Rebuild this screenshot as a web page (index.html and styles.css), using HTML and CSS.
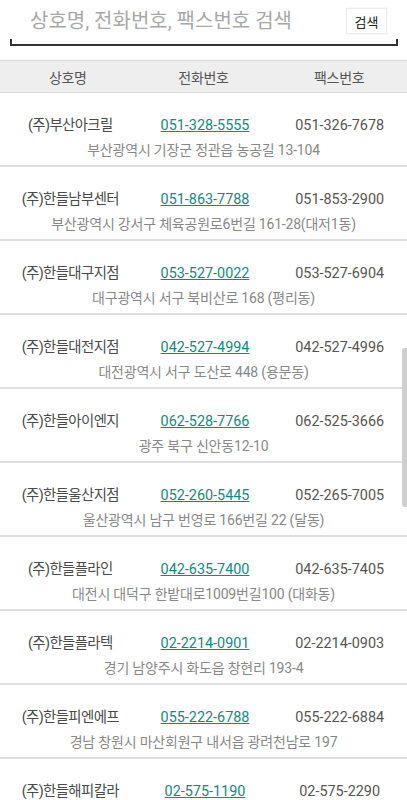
FILE: index.html
```html
<!DOCTYPE html>
<html lang="ko">
<head>
    <meta charset="UTF-8">
    <meta name="viewport" content="width=device-width, initial-scale=1.0">
    <title>대리점 찾기</title>
    <link rel="stylesheet" href="styles.css">
</head>
<body>
    <div class="search-bar">
        <div class="search-field">
            <input type="text" class="search-input" placeholder="상호명, 전화번호, 팩스번호 검색">
            <button type="button" class="search-button">검색</button>
        </div>
    </div>

    <div class="list-header">
        <div>상호명</div>
        <div>전화번호</div>
        <div>팩스번호</div>
    </div>

    <ul class="store-list">
        <li class="store">
            <div class="store-row">
                <span class="store-name">(주)부산아크릴</span>
                <a class="store-tel" href="tel:051-328-5555">051-328-5555</a>
                <span class="store-fax">051-326-7678</span>
            </div>
            <div class="store-addr">부산광역시 기장군 정관읍 농공길 13-104</div>
        </li>
        <li class="store">
            <div class="store-row">
                <span class="store-name">(주)한들남부센터</span>
                <a class="store-tel" href="tel:051-863-7788">051-863-7788</a>
                <span class="store-fax">051-853-2900</span>
            </div>
            <div class="store-addr">부산광역시 강서구 체육공원로6번길 161-28(대저1동)</div>
        </li>
        <li class="store">
            <div class="store-row">
                <span class="store-name">(주)한들대구지점</span>
                <a class="store-tel" href="tel:053-527-0022">053-527-0022</a>
                <span class="store-fax">053-527-6904</span>
            </div>
            <div class="store-addr">대구광역시 서구 북비산로 168 (평리동)</div>
        </li>
        <li class="store">
            <div class="store-row">
                <span class="store-name">(주)한들대전지점</span>
                <a class="store-tel" href="tel:042-527-4994">042-527-4994</a>
                <span class="store-fax">042-527-4996</span>
            </div>
            <div class="store-addr">대전광역시 서구 도산로 448 (용문동)</div>
        </li>
        <li class="store">
            <div class="store-row">
                <span class="store-name">(주)한들아이엔지</span>
                <a class="store-tel" href="tel:062-528-7766">062-528-7766</a>
                <span class="store-fax">062-525-3666</span>
            </div>
            <div class="store-addr">광주 북구 신안동12-10</div>
        </li>
        <li class="store">
            <div class="store-row">
                <span class="store-name">(주)한들울산지점</span>
                <a class="store-tel" href="tel:052-260-5445">052-260-5445</a>
                <span class="store-fax">052-265-7005</span>
            </div>
            <div class="store-addr">울산광역시 남구 번영로 166번길 22 (달동)</div>
        </li>
        <li class="store">
            <div class="store-row">
                <span class="store-name">(주)한들플라인</span>
                <a class="store-tel" href="tel:042-635-7400">042-635-7400</a>
                <span class="store-fax">042-635-7405</span>
            </div>
            <div class="store-addr">대전시 대덕구 한밭대로1009번길100 (대화동)</div>
        </li>
        <li class="store">
            <div class="store-row">
                <span class="store-name">(주)한들플라텍</span>
                <a class="store-tel" href="tel:02-2214-0901">02-2214-0901</a>
                <span class="store-fax">02-2214-0903</span>
            </div>
            <div class="store-addr">경기 남양주시 화도읍 창현리 193-4</div>
        </li>
        <li class="store">
            <div class="store-row">
                <span class="store-name">(주)한들피엔에프</span>
                <a class="store-tel" href="tel:055-222-6788">055-222-6788</a>
                <span class="store-fax">055-222-6884</span>
            </div>
            <div class="store-addr">경남 창원시 마산회원구 내서읍 광려천남로 197</div>
        </li>
        <li class="store">
            <div class="store-row">
                <span class="store-name">(주)한들해피칼라</span>
                <a class="store-tel" href="tel:02-575-1190">02-575-1190</a>
                <span class="store-fax">02-575-2290</span>
            </div>
        </li>
    </ul>

    <div class="scroll-thumb"></div>
</body>
</html>
```

FILE: styles.css
```css
body {
    margin: 0;
    font-family: Roboto, "Noto Sans CJK KR", sans-serif;
    background-color: white;
    color: #444;
    overflow: hidden;
    height: 800px;
    position: relative;
}

.search-bar {
    padding: 7px 9px 14px 10px;
}

.search-field {
    display: flex;
    align-items: center;
    height: 39px;
    border-bottom: 2px solid #333;
    border-left: 2px solid #333;
    border-right: 2px solid #333;
    box-sizing: border-box;
    position: relative;
}

/* only short ticks at the ends, like an android edit text */
.search-field::before {
    content: '';
    position: absolute;
    left: -2px;
    right: -2px;
    top: 0;
    height: 32px;
    background: white;
}

.search-input {
    flex: 1;
    min-width: 0;
    border: none;
    outline: none;
    background: transparent;
    font-family: inherit;
    font-size: 20px;
    color: #333;
    padding: 0 0 0 18px;
    margin-top: -10px;
    position: relative;
}

.search-input::placeholder {
    color: #a8a8a8;
}

.search-button {
    position: relative;
    align-self: flex-start;
    margin: 1px 9px 0 0;
    width: 41px;
    height: 26px;
    padding: 0;
    background: white;
    border: 1px solid #eee;
    box-shadow: 0 0 1px rgba(0, 0, 0, 0.15);
    font-family: inherit;
    font-size: 13px;
    color: #222;
}

.list-header {
    display: grid;
    grid-template-columns: 1fr 1fr 1fr;
    height: 31px;
    align-items: center;
    text-align: center;
    background: #eeeeee;
    border-top: 1px solid #d8d8d8;
    border-bottom: 1px solid #d8d8d8;
    font-size: 14px;
    letter-spacing: -0.3px;
    color: #555;
}

.store-list {
    list-style: none;
    margin: 0;
    padding: 0;
}

.store {
    height: 74px;
    padding-top: 22px;
    box-sizing: border-box;
    border-bottom: 2px solid #dedede;
}

.store-row {
    display: grid;
    grid-template-columns: 1fr 1fr 1fr;
    padding-left: 3px;
    text-align: center;
    font-size: 14.4px;
    line-height: 22px;
}

.store-name {
    color: #4a4a4a;
    letter-spacing: -0.6px;
}

.store-tel {
    color: #0e8b7c;
    text-decoration: underline;
}

.store-fax {
    color: #555;
}

.store-addr {
    text-align: center;
    font-size: 14px;
    line-height: 20px;
    letter-spacing: -0.2px;
    margin-top: 3px;
    color: #888;
}

.scroll-thumb {
    position: absolute;
    right: 0;
    top: 348px;
    width: 5px;
    height: 159px;
    background: #cfcfcf;
    border-radius: 3px 0 0 3px;
}
```
